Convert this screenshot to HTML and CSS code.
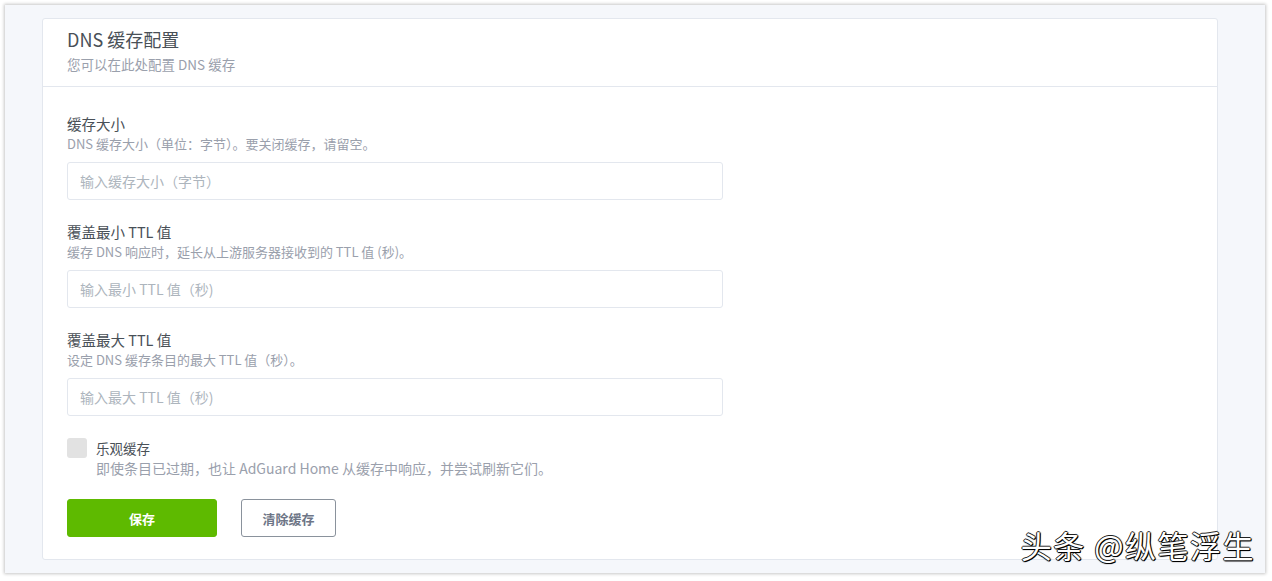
FILE: index.html
```html
<!DOCTYPE html>
<html lang="zh-CN">
<head>
<meta charset="utf-8">
<title>DNS 缓存配置</title>
<link rel="stylesheet" href="styles.css">
</head>
<body>
<div class="frame">
  <div class="card">
    <div class="card-header">
      <h3 class="card-title">DNS 缓存配置</h3>
      <div class="card-subtitle">您可以在此处配置 DNS 缓存</div>
    </div>
    <div class="card-body">
      <div class="form-group">
        <label class="form-label">缓存大小</label>
        <div class="form-desc">DNS 缓存大小（单位：字节）。要关闭缓存，请留空。</div>
        <input class="form-control" type="text" placeholder="输入缓存大小（字节）">
      </div>
      <div class="form-group">
        <label class="form-label">覆盖最小 TTL 值</label>
        <div class="form-desc">缓存 DNS 响应时，延长从上游服务器接收到的 TTL 值 (秒)。</div>
        <input class="form-control" type="text" placeholder="输入最小 TTL 值（秒)">
      </div>
      <div class="form-group">
        <label class="form-label">覆盖最大 TTL 值</label>
        <div class="form-desc">设定 DNS 缓存条目的最大 TTL 值（秒）。</div>
        <input class="form-control" type="text" placeholder="输入最大 TTL 值（秒)">
      </div>
      <div class="check-group">
        <span class="checkbox"></span>
        <div class="check-text">
          <div class="check-label">乐观缓存</div>
          <div class="check-desc">即使条目已过期，也让 AdGuard Home 从缓存中响应，并尝试刷新它们。</div>
        </div>
      </div>
      <div class="btn-row">
        <button class="btn btn-success">保存</button>
        <button class="btn btn-outline">清除缓存</button>
      </div>
    </div>
  </div>
  <div class="watermark">头条 @纵笔浮生</div>
</div>
</body>
</html>
```

FILE: styles.css
```css
* { box-sizing: border-box; }
html, body { margin: 0; padding: 0; background: #ffffff; }
body {
  padding: 5px 7px 8px 5px;
  font-family: "Noto Sans CJK SC", "Noto Sans", sans-serif;
  color: #495057;
}
.frame {
  position: relative;
  height: 568px;
  background: #f5f7fb;
  box-shadow: 0 0 3px 1px rgba(0, 0, 0, 0.22);
  padding: 13px 47px 13px 37px;
}
.card {
  height: 542px;
  background: #ffffff;
  border: 1px solid #e3e7ee;
  border-radius: 3px;
}
.card-header {
  padding: 9px 24px 12px 24px;
  border-bottom: 1px solid #e3e7ee;
}
.card-title {
  margin: 0;
  font-size: 18px;
  font-weight: 400;
  line-height: 22px;
  color: #495057;
}
.card-subtitle {
  margin-top: 4px;
  font-size: 13.5px;
  line-height: 20px;
  color: #9aa0ac;
}
.card-body {
  padding: 27px 24px 24px 24px;
}
.form-group {
  margin-bottom: 22px;
}
.form-label {
  display: block;
  font-size: 14.5px;
  line-height: 20px;
  color: #495057;
}
.form-desc {
  font-size: 13px;
  line-height: 20px;
  color: #9aa0ac;
}
.form-control {
  display: block;
  width: 656px;
  height: 38px;
  margin-top: 8px;
  padding: 0 12px;
  border: 1px solid #e3e7ee;
  border-radius: 3px;
  font-family: inherit;
  font-size: 14px;
  color: #495057;
  background: #fff;
  outline: none;
}
.form-control::placeholder { color: #adb5bd; }
.check-group {
  display: flex;
  gap: 9px;
  margin-top: 20px;
}
.checkbox {
  flex: none;
  width: 20px;
  height: 20px;
  border-radius: 3px;
  background: #e2e2e2;
}
.check-label {
  font-size: 13.5px;
  line-height: 20px;
  color: #495057;
}
.check-desc {
  font-size: 14px;
  line-height: 21px;
  color: #9aa0ac;
}
.btn-row {
  display: flex;
  gap: 24px;
  margin-top: 20px;
}
.btn {
  height: 38px;
  border-radius: 3px;
  font-family: inherit;
  font-size: 13px;
  font-weight: 700;
  cursor: pointer;
}
.btn-success {
  width: 150px;
  border: 1px solid #5eba00;
  background: #5eba00;
  color: #ffffff;
}
.btn-outline {
  width: 95px;
  border: 1px solid #8a929c;
  background: #ffffff;
  color: #6e7687;
}
.watermark {
  position: absolute;
  right: 10px;
  bottom: 11px;
  font-size: 31px;
  line-height: 34px;
  color: #ffffff;
  letter-spacing: 1.5px;
  text-shadow: 1px 1px 0 #000, -1px 0 0 #222, 0 -1px 0 #222, 1px 0 1px #000, 0 1px 1px #000;
}
```
